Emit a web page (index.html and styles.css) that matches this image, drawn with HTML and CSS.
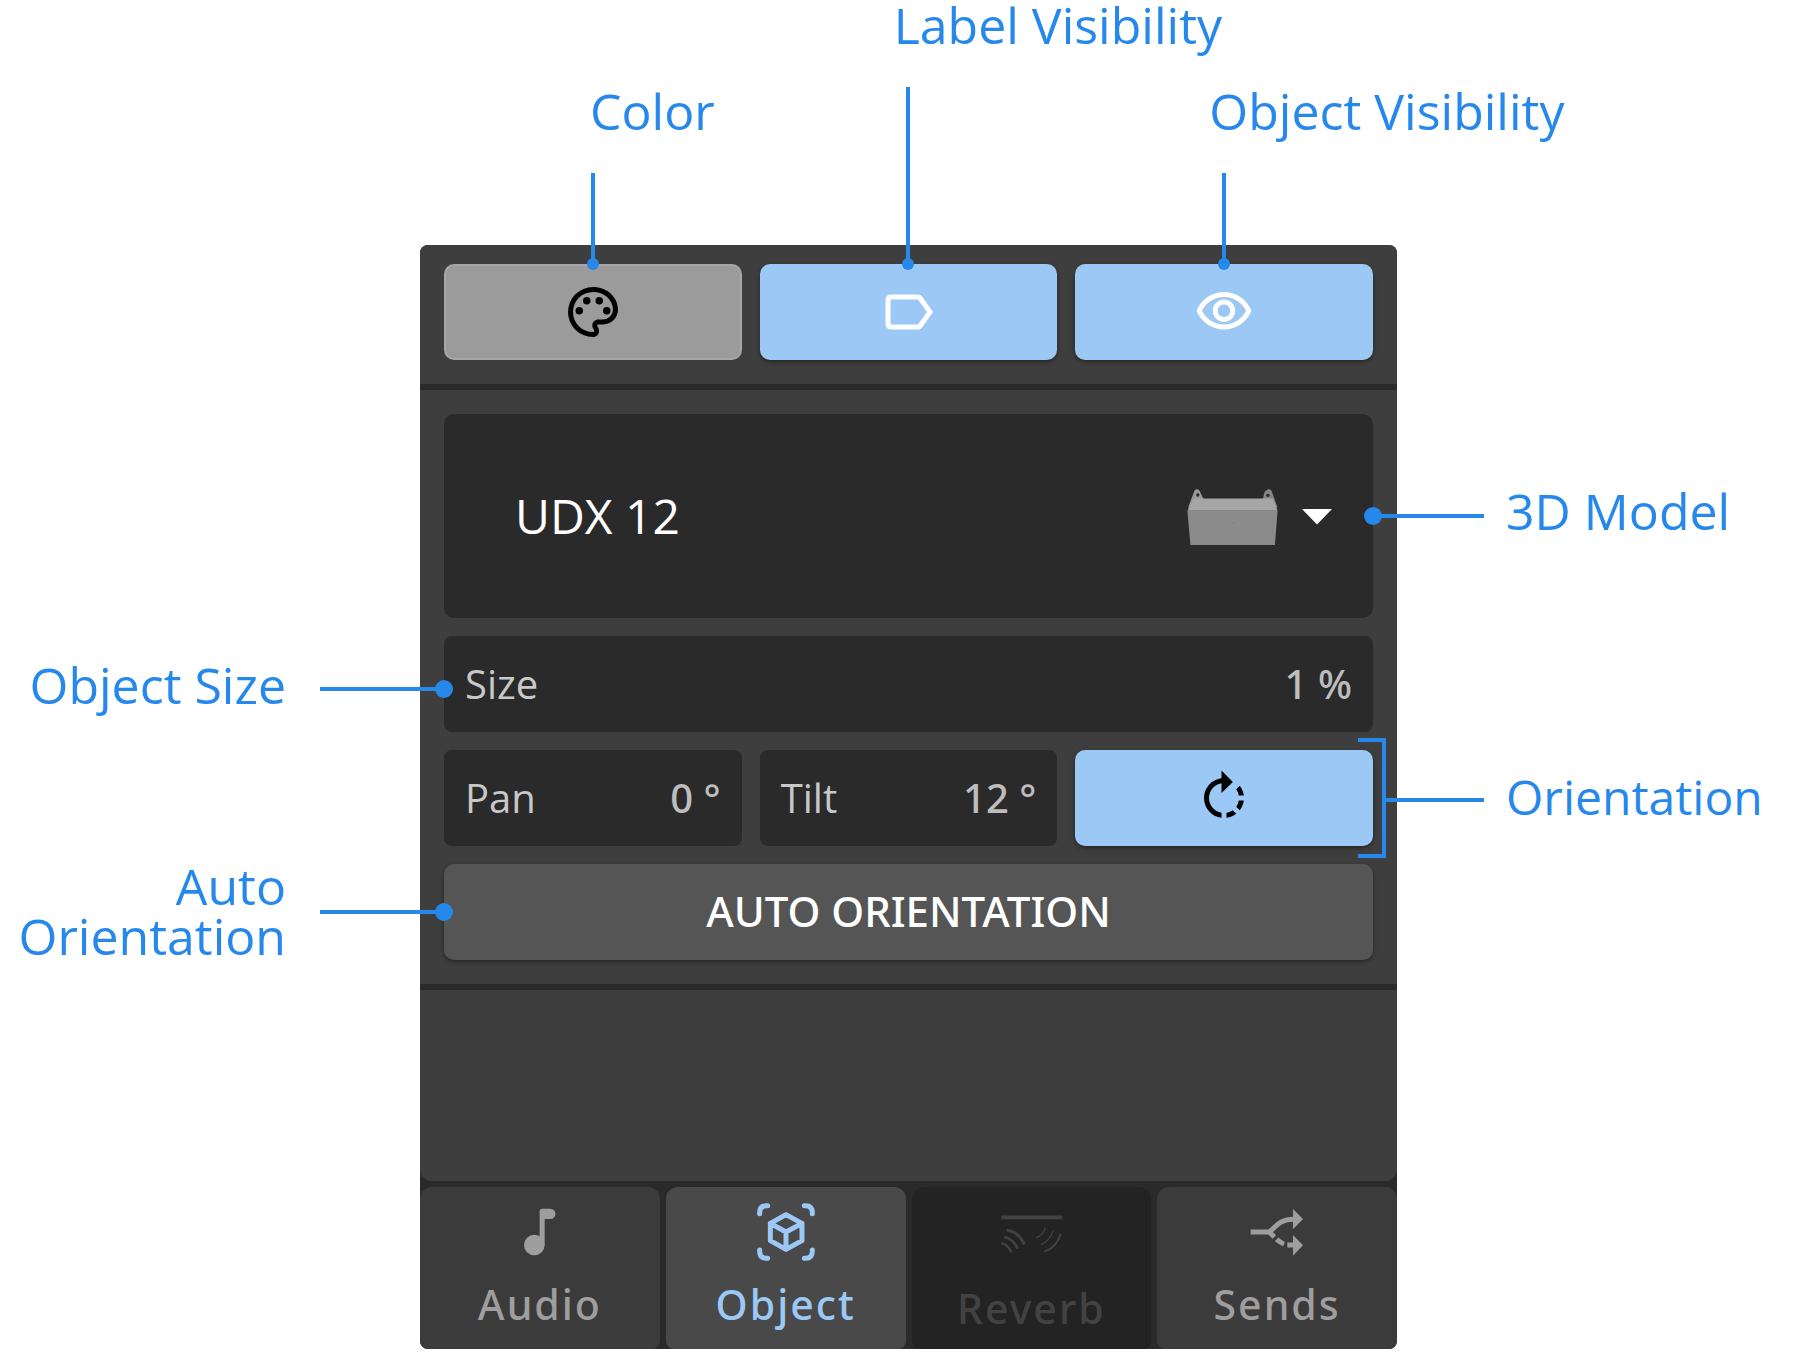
FILE: index.html
```html
<!DOCTYPE html>
<html lang="en">
<head>
<meta charset="utf-8">
<meta name="viewport" content="width=device-width, initial-scale=1">
<title>Object tab</title>
<link rel="stylesheet" href="styles.css">
</head>
<body>
<main class="figure">
  <div class="notes notes--top">
    <p class="note note--color">Color</p>
    <p class="note note--raised">Label Visibility</p>
    <p class="note">Object Visibility</p>
  </div>

  <div class="notes notes--left">
    <p class="note">Object Size</p>
    <p class="note">Auto<br>Orientation</p>
  </div>

  <section class="panel" aria-label="Object settings">
    <div class="panel__body">
      <div class="group group--display">
        <div class="anchor">
          <button class="btn btn--swatch" type="button" aria-label="Color">
            <svg class="icon" viewBox="0 0 24 24" aria-hidden="true"><path d="M12,22A10,10 0 0,1 2,12A10,10 0 0,1 12,2C17.5,2 22,6 22,11A6,6 0 0,1 16,17H14.2C13.9,17 13.7,17.2 13.7,17.5C13.7,17.6 13.8,17.7 13.8,17.8C14.2,18.3 14.4,18.9 14.4,19.5C14.5,20.9 13.4,22 12,22M12,4A8,8 0 0,0 4,12A8,8 0 0,0 12,20C12.3,20 12.5,19.8 12.5,19.5C12.5,19.2 12.4,19.1 12.3,19C11.9,18.5 11.7,18 11.7,17.4C11.7,16 12.8,15 14.2,15H16A4,4 0 0,0 20,11C20,7.1 16.4,4 12,4"/><circle cx="6.5" cy="11.5" r="1.5"/><circle cx="9.5" cy="7.5" r="1.5"/><circle cx="14.5" cy="7.5" r="1.5"/><circle cx="17.5" cy="11.5" r="1.5"/></svg>
          </button>
          <span class="leader leader--down"></span>
        </div>
        <div class="anchor">
          <button class="btn btn--on" type="button" aria-pressed="true" aria-label="Label visibility">
            <svg class="icon" viewBox="0 0 24 24" aria-hidden="true"><path d="M16,17H5V7H16L19.55,12M17.63,5.84C17.27,5.33 16.67,5 16,5H5A2,2 0 0,0 3,7V17A2,2 0 0,0 5,19H16C16.67,19 17.27,18.66 17.63,18.15L22,12L17.63,5.84Z"/></svg>
          </button>
          <span class="leader leader--down leader--long"></span>
        </div>
        <div class="anchor">
          <button class="btn btn--on" type="button" aria-pressed="true" aria-label="Object visibility">
            <svg class="icon" viewBox="0 0 24 24" aria-hidden="true"><path d="M12 6c3.79 0 7.17 2.13 8.82 5.5C19.17 14.87 15.79 17 12 17s-7.17-2.13-8.82-5.5C4.83 8.13 8.21 6 12 6m0-2C7 4 2.73 7.11 1 11.5 2.73 15.89 7 19 12 19s9.27-3.11 11-7.5C21.27 7.11 17 4 12 4zm0 5c1.38 0 2.5 1.12 2.5 2.5S13.38 14 12 14s-2.5-1.12-2.5-2.5S10.62 9 12 9m0-2c-2.48 0-4.5 2.02-4.5 4.5S9.52 16 12 16s4.5-2.02 4.5-4.5S14.48 7 12 7z"/></svg>
          </button>
          <span class="leader leader--down"></span>
        </div>
      </div>

      <div class="group group--shape">
        <div class="anchor wide model">
          <select class="model__select" aria-label="3D model">
            <option selected>UDX 12</option>
          </select>
          <span class="model__art" aria-hidden="true">
            <svg class="speaker" viewBox="262 267 271 170">
              <path d="M266 320L284 272Q292 264 299 272L311 297L300 302L266 326Z" fill="#9a9a9a"/>
              <path d="M488 298L493 276Q504 262 514 272L532 322L520 326L506 300Z" fill="#858585"/>
              <circle cx="294" cy="285" r="5" fill="#2a2a2a"/>
              <circle cx="503" cy="286" r="5" fill="#2a2a2a"/>
              <path d="M283 295H518L532 332H263Z" fill="#a6a6a6"/>
              <path d="M263 332H532L524 434H272Z" fill="#8b8b8b"/>
              <circle cx="400" cy="368" r="2" fill="#777"/>
            </svg>
            <svg class="caret" viewBox="0 0 30 16"><path d="M0 0H30L15 15.500Z"/></svg>
          </span>
          <span class="leader leader--right"></span>
        </div>

        <div class="anchor wide field">
          <label for="size">Size</label>
          <input id="size" type="text" value="1 %">
          <span class="leader leader--left leader--low"></span>
        </div>

        <div class="field">
          <label for="pan">Pan</label>
          <input id="pan" type="text" value="0 °">
        </div>
        <div class="field">
          <label for="tilt">Tilt</label>
          <input id="tilt" type="text" value="12 °">
        </div>
        <div class="anchor">
          <button class="btn btn--on btn--dark-icon" type="button" aria-pressed="true" aria-label="Rotate">
            <svg class="icon" viewBox="0 0 24 24" aria-hidden="true"><path d="M15.550 5.550L11 1v3.070C7.060 4.560 4 7.920 4 12s3.050 7.440 7 7.930v-2.020c-2.840-.480-5-2.940-5-5.910s2.160-5.430 5-5.910V10l4.550-4.450zM19.930 11c-.170-1.390-.720-2.730-1.620-3.890l-1.420 1.420c.540.750.880 1.600 1.020 2.470h2.020zM13 17.900v2.020c1.390-.170 2.740-.710 3.900-1.610l-1.440-1.440c-.750.540-1.590.890-2.460 1.030zm3.890-2.420l1.420 1.410c.900-1.160 1.450-2.500 1.620-3.890h-2.020c-.140.870-.480 1.720-1.020 2.480z"/></svg>
          </button>
          <span class="bracket"></span>
        </div>

        <div class="anchor wide">
          <button class="btn btn--plain" type="button">AUTO ORIENTATION</button>
          <span class="leader leader--left"></span>
        </div>
      </div>
    </div>

    <nav class="tabs" aria-label="Panel tabs">
      <button class="tab" type="button">
        <svg class="tab__icon" viewBox="323 120 192 192" aria-hidden="true"><circle cx="402" cy="255" r="31"/><path d="M418 255V154Q418 146 426 146H450A15.500 15.500 0 0 1 450 177H433V255Z"/></svg>
        <span>Audio</span>
      </button>
      <button class="tab tab--active" type="button" aria-current="true">
        <svg class="tab__icon tab__icon--line" viewBox="1060 120 192 192" stroke-width="15" aria-hidden="true"><path d="M1077 161V158Q1077 137 1097 137H1101M1211 137H1215Q1235 137 1235 158V161M1077 270V274Q1077 295 1097 295H1101M1211 295H1215Q1235 295 1235 274V270M1156 164L1204 190V242L1156 268L1109 242V190ZM1109 190L1156 216L1204 190M1156 216V268"/></svg>
        <span>Object</span>
      </button>
      <button class="tab tab--off" type="button" disabled>
        <svg class="tab__icon tab__icon--line" viewBox="299 132 192 192" aria-hidden="true"><g stroke-linecap="butt"><path stroke-width="11" d="M306 172H489"/><path stroke-width="9" d="M322 210Q358 215 375 254"/><path stroke-width="8" d="M314 231Q342 236 355 266"/><path stroke-width="7" d="M306 250Q326 253 336 277"/><path stroke-width="4" d="M438 203Q432 226 411 233M461 211Q452 243 424 254"/><path stroke-width="6" d="M484 221Q472 262 435 275"/></g></svg>
        <span>Reverb</span>
      </button>
      <button class="tab" type="button">
        <svg class="tab__icon" viewBox="1036 120 192 192" aria-hidden="true"><path d="M1180 147L1210 177L1180 208ZM1180 225L1210 256L1180 287Z"/><path fill="none" stroke="currentColor" stroke-width="15" d="M1053 216H1108C1128 203 1136 178 1182 178M1106 213L1124 231M1131 238Q1141 248 1153 252M1163 255H1182"/></svg>
        <span>Sends</span>
      </button>
    </nav>
  </section>

  <div class="notes notes--right">
    <p class="note">3D Model</p>
    <p class="note note--compact">Orientation</p>
  </div>
</main>
</body>
</html>
```
FILE: styles.css
```css
:root {
  --accent: #2788ec;
  --surface: #3e3e3e;
  --well: #2a2a2a;
  --on: #9cc8f5;
  --line: 4px;
  --medium-face: "Noto Sans", "Open Sans", sans-serif;
}

* {
  box-sizing: border-box;
}

body {
  margin: 0;
  background: #fff;
  font-family: "Open Sans", "Noto Sans", sans-serif;
}

button,
input,
select {
  margin: 0;
  border: 0;
  font: inherit;
  color: inherit;
}

.figure {
  display: grid;
  grid-template-columns: minmax(0, 420fr) minmax(0, 977fr) minmax(0, 404fr);
  grid-template-areas:
    ". top ."
    "left panel right";
  padding-bottom: 10px;
}

/* Callout labels */
.notes {
  color: var(--accent);
  font-size: 50px;
  line-height: 50px;
}

.note {
  margin: 0;
  white-space: nowrap;
}

.notes--top {
  grid-area: top;
  display: grid;
  grid-template-columns: repeat(3, minmax(0, 1fr));
  gap: 18px;
  min-height: 245px;
  padding: 0 24px;
}

.notes--top .note {
  padding: 86px 0 0 134px;
}

.notes--top .note--color {
  padding-left: 146px;
}

.notes--top .note--raised {
  padding-top: 0;
}

.notes--left {
  grid-area: left;
  display: flex;
  flex-direction: column;
  align-items: flex-end;
  gap: 151px;
  padding: 415px 134px 0 0;
  text-align: right;
}

.notes--right {
  grid-area: right;
  display: flex;
  flex-direction: column;
  gap: 236px;
  padding: 241px 0 0 109px;
}

.note--compact {
  font-size: 48px;
}

/* Panel */
.panel {
  grid-area: panel;
  display: flex;
  flex-direction: column;
  gap: 6px;
  border-radius: 8px;
  background: var(--well);
}

.panel__body {
  flex: 1;
  min-height: 936px;
  border-radius: 8px 8px 12px 12px;
  background: var(--surface);
}

.group {
  display: grid;
  grid-template-columns: repeat(3, minmax(0, 1fr));
  gap: 18px;
  padding: 24px;
  border-bottom: 6px solid var(--well);
}

.group--display {
  padding-top: 19px;
}

.wide {
  grid-column: 1 / -1;
}

.anchor {
  position: relative;
}

.btn {
  display: flex;
  align-items: center;
  justify-content: center;
  width: 100%;
  height: 96px;
  padding: 0;
  border-radius: 10px;
  box-shadow: 0 2px 4px rgba(0, 0, 0, 0.4);
}

.btn--swatch {
  border: 2px solid #a6a6a6;
  background: #9b9b9b;
  box-shadow: none;
  color: #000;
}

.btn--on {
  background: var(--on);
  color: #fff;
}

.btn--dark-icon {
  color: #000;
}

.btn--plain {
  padding-bottom: 4px;
  background: #555;
  color: #fff;
  font-family: var(--medium-face);
  font-size: 42px;
  font-weight: 500;
}

.icon {
  width: 60px;
  height: 60px;
  fill: currentColor;
}

.model {
  display: grid;
}

.model__select {
  grid-area: 1 / 1;
  width: 100%;
  height: 204px;
  padding: 0 200px 2px 71px;
  border-radius: 10px;
  appearance: none;
  background: var(--well);
  color: #fff;
  font-size: 48px;
}

.model__art {
  grid-area: 1 / 1;
  display: flex;
  align-items: center;
  justify-self: end;
  gap: 24px;
  padding: 2px 41px 0 0;
  pointer-events: none;
}

.speaker {
  width: 91px;
  height: 57px;
}

.caret {
  width: 30px;
  height: 16px;
  fill: #fff;
}

.field {
  display: flex;
  align-items: center;
  gap: 12px;
  height: 96px;
  padding: 0 21px 2px;
  border-radius: 8px;
  background: var(--well);
  color: #c8c8c8;
  font-size: 40px;
}

.field input {
  flex: 1;
  width: 0;
  min-width: 0;
  padding: 0;
  background: none;
  color: #bdbdbd;
  font-family: var(--medium-face);
  font-weight: 500;
  text-align: right;
}

/* Tabs */
.tabs {
  display: grid;
  grid-template-columns: repeat(4, minmax(0, 1fr));
  gap: 6px;
}

.tab {
  display: flex;
  flex-direction: column;
  align-items: center;
  gap: 12px;
  padding: 13px 0 17px;
  border-radius: 12px 12px 8px 8px;
  background: #3b3b3b;
  color: #9e9e9e;
  font-family: var(--medium-face);
  font-size: 41px;
  font-weight: 500;
  line-height: 56px;
  letter-spacing: 2px;
}

.tab--active {
  background: #494949;
  color: var(--on);
}

.tab--off {
  padding: 17px 0 13px;
  background: #232323;
  color: #424242;
}

.tab__icon {
  width: 64px;
  height: 64px;
  fill: currentColor;
}

.tab__icon--line {
  fill: none;
  stroke: currentColor;
  stroke-linecap: round;
  stroke-linejoin: round;
}

/* Leader lines drawn over the controls they point to */
.leader {
  position: absolute;
  background: var(--accent);
}

.leader::after {
  content: "";
  position: absolute;
  border-radius: 50%;
  background: var(--accent);
}

.leader--down {
  bottom: 100%;
  left: 50%;
  width: var(--line);
  height: 91px;
  margin-left: -2px;
}

.leader--long {
  height: 177px;
}

.leader--down::after {
  bottom: -6px;
  left: -4px;
  width: 12px;
  height: 12px;
}

.leader--left,
.leader--right {
  top: 50%;
  height: var(--line);
  margin-top: -2px;
}

.leader--left {
  right: 100%;
  width: 124px;
}

.leader--low {
  margin-top: 3px;
}

.leader--right {
  left: 100%;
  width: 111px;
}

.leader--left::after,
.leader--right::after {
  top: -7px;
  width: 18px;
  height: 18px;
}

.leader--left::after {
  right: -9px;
}

.leader--right::after {
  left: -9px;
}

.bracket {
  position: absolute;
  top: -12px;
  right: -13px;
  bottom: -12px;
  width: 28px;
  border: var(--line) solid var(--accent);
  border-left: 0;
}

.bracket::after {
  content: "";
  position: absolute;
  top: 50%;
  left: 100%;
  width: 102px;
  height: var(--line);
  background: var(--accent);
}
```
